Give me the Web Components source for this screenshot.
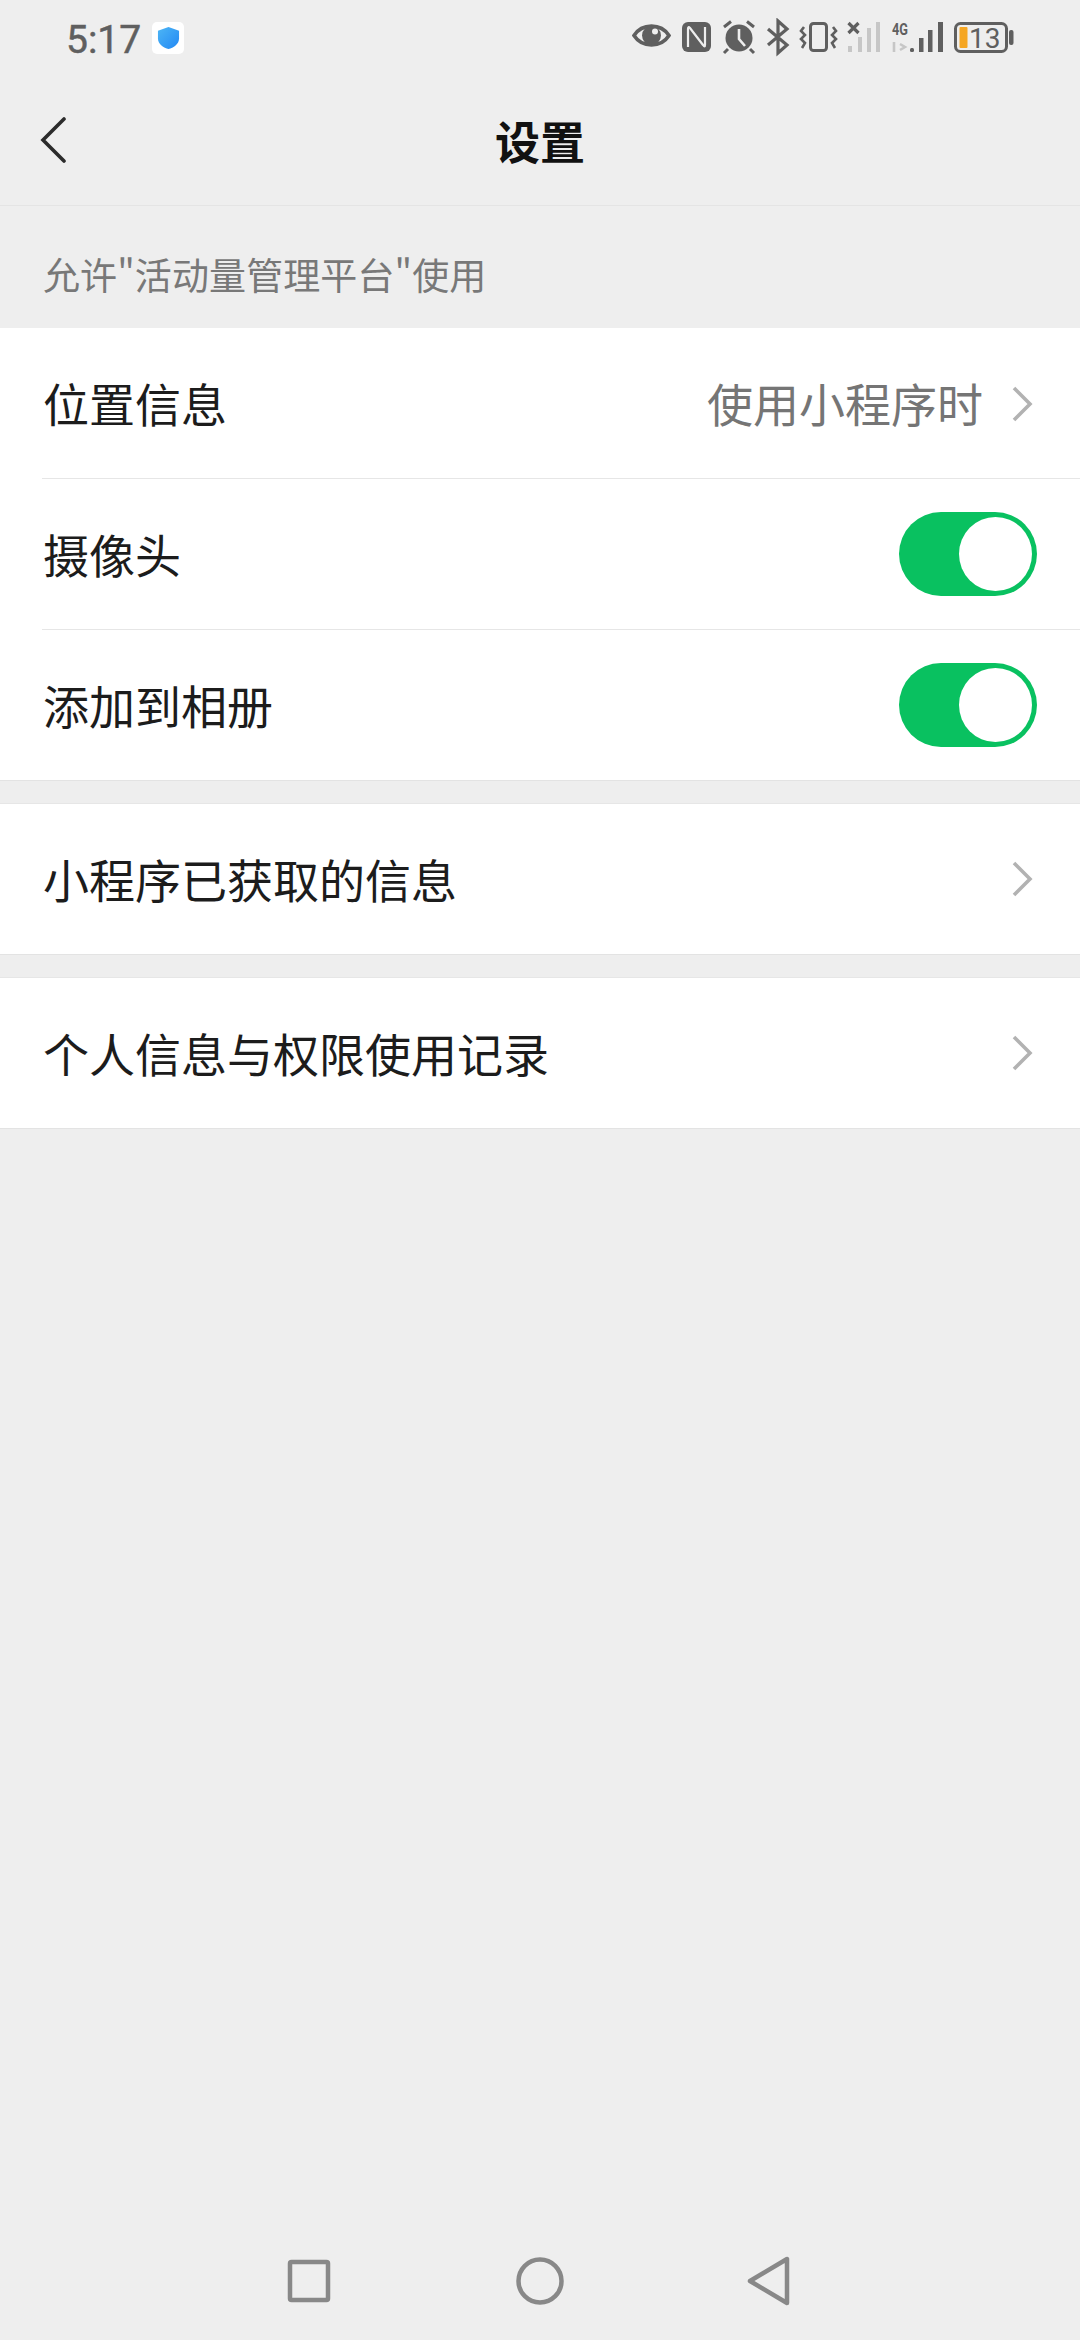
<!DOCTYPE html>
<html lang="zh-CN"><head><meta charset="utf-8">
<style>
html,body{margin:0;padding:0;background:#eee;}
body{width:1080px;height:2340px;overflow:hidden;display:flex;flex-direction:column;font-family:"Noto Sans CJK SC","Noto Sans",sans-serif;color:#1c1c1c;}
</style></head><body>
<status-bar></status-bar>
<nav-bar>设置</nav-bar>
<section-caption>允许"活动量管理平台"使用</section-caption>
<setting-group>
  <setting-row divider value="使用小程序时" chevron>位置信息</setting-row>
  <setting-row divider toggle>摄像头</setting-row>
  <setting-row toggle>添加到相册</setting-row>
</setting-group>
<setting-group gap>
  <setting-row chevron>小程序已获取的信息</setting-row>
</setting-group>
<setting-group gap>
  <setting-row chevron>个人信息与权限使用记录</setting-row>
</setting-group>
<android-nav></android-nav>
<script>
function def(name, html, init){
  customElements.define(name, class extends HTMLElement{
    constructor(){super();this.attachShadow({mode:'open'}).innerHTML=html;}
    connectedCallback(){ if(init) init(this); }
  });
}
def('status-bar',`<style>
:host{display:flex;align-items:center;height:76px;padding:0 0 0 66px;color:#5f5f5f;flex:none}
.t{font:400 39px/1 "Roboto",sans-serif;margin-top:4px;-webkit-text-stroke:.5px #5f5f5f}
.sh{margin-left:11px;margin-top:0;width:32px;height:32px;background:#fff;border-radius:5px;display:flex;align-items:center;justify-content:center}
.r{margin-left:auto;margin-right:66px}
svg{display:block}
</style>
<span class="t">5:17</span>
<span class="sh"><svg width="23" height="24" viewBox="0 0 24 25"><defs><linearGradient id="g" x1="0" y1="0" x2="1" y2="1"><stop offset="0" stop-color="#4db6f5"/><stop offset="1" stop-color="#2288f4"/></linearGradient></defs><path d="M12 1 L23 5 V13 C23 19 17 23 12 24 C7 23 1 19 1 13 V5 Z" fill="url(#g)"/></svg></span>
<svg class="r" width="382" height="40" viewBox="0 0 382 40" fill="none">
  <path d="M2 17.5 C10 5 29 5 37 17.5 C29 30 10 30 2 17.5 Z" stroke="#5f5f5f" stroke-width="3.6"/>
  <circle cx="19.5" cy="17.5" r="9.5" fill="#5f5f5f"/><circle cx="23" cy="13.5" r="3" fill="#eee"/>
  <rect x="50" y="4" width="29" height="30" rx="6" fill="#5f5f5f"/>
  <path d="M56 29 V11 Q56 8 58 10 L71 27 Q73 30 73 27 V9" stroke="#eee" stroke-width="2.2"/>
  <circle cx="107" cy="20" r="13.5" fill="#5f5f5f"/>
  <path d="M107 11 V21 L113 28" stroke="#eee" stroke-width="2.6"/>
  <path d="M92 9 L99 3.5 M122 9 L115 3.5 M96 31 L92 35 M118 31 L122 35" stroke="#5f5f5f" stroke-width="3"/>
  <path d="M136 11 L155 27 L146 35 V3 L155 11 L136 27" stroke="#5f5f5f" stroke-width="3.2"/>
  <rect x="178.5" y="5.5" width="16" height="27" rx="3" stroke="#5f5f5f" stroke-width="3"/>
  <path d="M172 9 L169 13 L173 17 L169 21 L173 25 L170 30 M201 9 L204 13 L200 17 L204 21 L200 25 L203 30" stroke="#5f5f5f" stroke-width="2.6"/>
  <path d="M216.5 5 L226.5 15 M226.5 5 L216.5 15" stroke="#5f5f5f" stroke-width="3.2"/>
  <g fill="#c6c6c6"><rect x="216" y="28" width="4" height="6"/><rect x="226" y="19" width="4" height="15"/><rect x="235" y="10" width="4" height="24"/><rect x="244" y="4" width="4" height="30"/></g>
  <text x="260" y="17" font-family="Roboto,sans-serif" font-weight="700" font-size="16" textLength="16" lengthAdjust="spacingAndGlyphs" fill="#5f5f5f">4G</text>
  <path d="M262 24 V34 M268 26 L273 29 L268 32" stroke="#c6c6c6" stroke-width="2.6"/>
  <g fill="#5f5f5f"><rect x="278" y="30" width="4" height="4" rx="1.5"/><rect x="287" y="20" width="4.5" height="14"/><rect x="296" y="12" width="4.5" height="22"/><rect x="306" y="4" width="5" height="30"/></g>
  <rect x="323.5" y="5.5" width="51" height="28" rx="5" stroke="#5f5f5f" stroke-width="3"/>
  <rect x="327.5" y="9" width="8" height="21" rx="1" fill="#f5a623"/>
  <rect x="377" y="12" width="4.5" height="15" rx="2" fill="#5f5f5f"/>
  <text x="337" y="30" font-family="Roboto,sans-serif" font-size="28" fill="#5f5f5f">13</text>
</svg>`);
def('nav-bar',`<style>
:host{display:flex;align-items:center;justify-content:center;height:129px;flex:none;position:relative;border-bottom:1px solid #e4e4e4;font-size:45px;font-weight:700;color:#111}
.b{position:absolute;left:40px;top:41px}
svg{display:block}
</style><span class="b"><svg width="26" height="46" viewBox="0 0 26 46" fill="none"><path d="M24 2 L3 23 L24 44" stroke="#2b2b2b" stroke-width="3.6" stroke-linecap="round"/></svg></span><slot></slot>`);
def('section-caption',`<style>
:host{display:flex;align-items:center;height:122px;box-sizing:border-box;padding:14px 0 0 43px;flex:none;font-size:37px;letter-spacing:.1px;color:#787878;font-family:"Noto Sans CJK SC",sans-serif}
</style><slot></slot>`);
def('setting-group',`<style>
:host{display:block;background:#fff;flex:none;border-bottom:1px solid #e3e3e3}
:host([gap]){margin-top:22px;border-top:1px solid #e6e6e6}
</style><slot></slot>`);
def('setting-row',`<style>
:host{display:block;font-size:46px;color:#1c1c1c}
.w{display:flex;align-items:center;height:150px;padding:0 43px 0 43px;box-sizing:border-box;position:relative}
.l,.v{padding-bottom:3px}
.v{color:#757575;font-size:46px}
.sp{margin-left:auto}
.ch{margin-left:27px;margin-right:3px;display:none}
.d{position:absolute;left:42px;right:0;bottom:0;height:1px;background:#e6e6e6;display:none}
svg{display:block}
toggle-switch{display:none}
:host([toggle]) toggle-switch{display:block}
:host([chevron]) .ch{display:block}
:host([divider]) .d{display:block}
:host([divider]) .w{height:151px}
</style><div class="w"><span class="l"><slot></slot></span><span class="sp"></span><span class="v"></span>
<svg class="ch" width="24" height="36" viewBox="0 0 24 36" fill="none"><path d="M4 2 L20 18 L4 34" stroke="#b2b2b2" stroke-width="3.6"/></svg>
<toggle-switch></toggle-switch><span class="d"></span></div>`, el=>{
  el.shadowRoot.querySelector('.v').textContent=el.getAttribute('value')||'';
});
def('toggle-switch',`<style>
:host{display:block;width:138px;height:84px;margin-top:-1px;box-sizing:border-box;background:#09c160;border-radius:42px;position:relative;flex:none}
i{position:absolute;right:5px;top:5px;width:73px;height:74px;border-radius:50%;background:#fff}
</style><i></i>`);
def('android-nav',`<style>
:host{display:block;margin-top:auto;height:120px;flex:none}
svg{display:block}
</style><svg width="1080" height="120" viewBox="0 0 1080 120" fill="none" stroke="#888" stroke-width="4.5" stroke-linejoin="round">
<rect x="290" y="42" width="38" height="38" rx="1.5"/>
<circle cx="540" cy="61" r="21.5"/>
<path d="M750 61 L787 39 V83 Z"/></svg>`);
</script>
</body></html>
